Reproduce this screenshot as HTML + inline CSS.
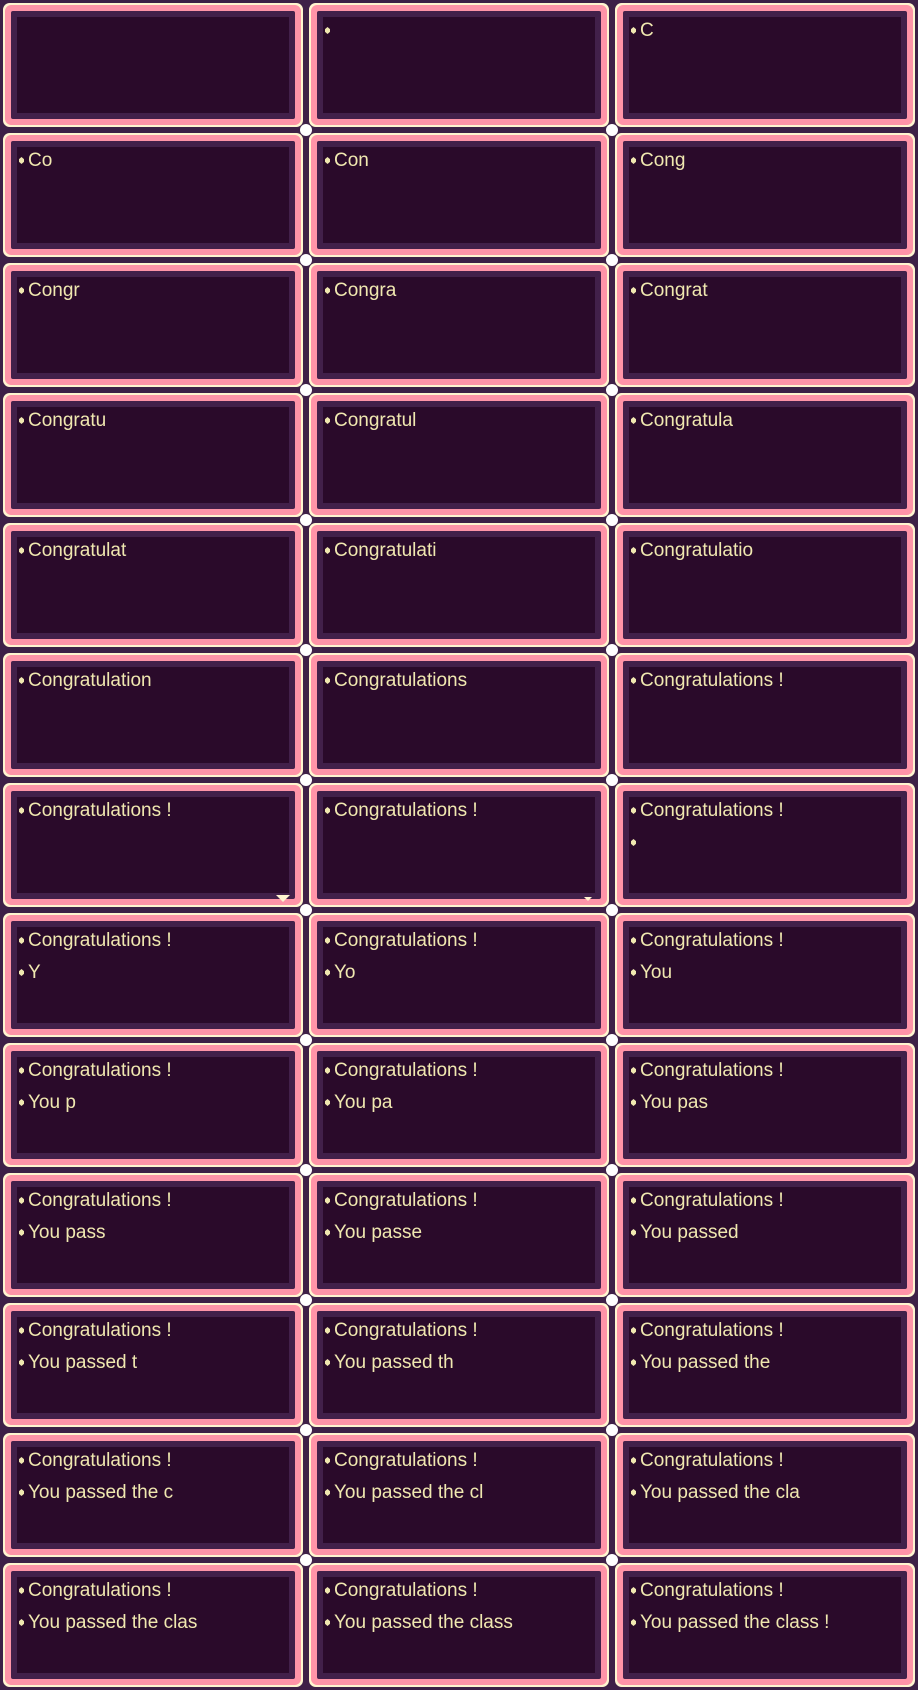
<!DOCTYPE html>
<html><head><meta charset="utf-8"><style>
html,body{margin:0;padding:0;background:#3e2047;}
body{width:918px;height:1690px;position:relative;overflow:hidden;}
.g{display:grid;grid-template-columns:repeat(3,306px);grid-template-rows:repeat(13,130px);}
.cell{position:relative;width:306px;height:130px;}
.b{position:absolute;left:11px;top:11px;width:272px;height:96px;background:#2a0a2a;border:6px solid #42204a;box-shadow:0 0 0 6px #ff94a8,0 0 0 8px #fff5d0;border-radius:2px;}
.t{position:absolute;left:2px;top:-2px;font-family:"Liberation Sans",sans-serif;font-size:19px;line-height:32px;color:#f0e8b0;white-space:pre;letter-spacing:0px;}
.d{display:inline-block;width:5px;height:7px;background:#f0e8b0;margin-right:4px;vertical-align:2px;clip-path:polygon(50% 0,100% 30%,100% 70%,50% 100%,0 70%,0 30%);}
.dot{position:absolute;width:12px;height:12px;border-radius:50%;background:#fff;z-index:5;}
.tri{position:absolute;width:0;height:0;border-left:7px solid transparent;border-right:7px solid transparent;border-top:7px solid #fff5d0;z-index:6;}
</style></head><body>
<div class="g">
<div class="cell"><div class="b"></div></div>
<div class="cell"><div class="b"><div class="t"><span class="d"></span></div></div></div>
<div class="cell"><div class="b"><div class="t"><span class="d"></span>C</div></div></div>
<div class="cell"><div class="b"><div class="t"><span class="d"></span>Co</div></div></div>
<div class="cell"><div class="b"><div class="t"><span class="d"></span>Con</div></div></div>
<div class="cell"><div class="b"><div class="t"><span class="d"></span>Cong</div></div></div>
<div class="cell"><div class="b"><div class="t"><span class="d"></span>Congr</div></div></div>
<div class="cell"><div class="b"><div class="t"><span class="d"></span>Congra</div></div></div>
<div class="cell"><div class="b"><div class="t"><span class="d"></span>Congrat</div></div></div>
<div class="cell"><div class="b"><div class="t"><span class="d"></span>Congratu</div></div></div>
<div class="cell"><div class="b"><div class="t"><span class="d"></span>Congratul</div></div></div>
<div class="cell"><div class="b"><div class="t"><span class="d"></span>Congratula</div></div></div>
<div class="cell"><div class="b"><div class="t"><span class="d"></span>Congratulat</div></div></div>
<div class="cell"><div class="b"><div class="t"><span class="d"></span>Congratulati</div></div></div>
<div class="cell"><div class="b"><div class="t"><span class="d"></span>Congratulatio</div></div></div>
<div class="cell"><div class="b"><div class="t"><span class="d"></span>Congratulation</div></div></div>
<div class="cell"><div class="b"><div class="t"><span class="d"></span>Congratulations</div></div></div>
<div class="cell"><div class="b"><div class="t"><span class="d"></span>Congratulations !</div></div></div>
<div class="cell"><div class="b"><div class="t"><span class="d"></span>Congratulations !</div></div></div>
<div class="cell"><div class="b"><div class="t"><span class="d"></span>Congratulations !</div></div></div>
<div class="cell"><div class="b"><div class="t"><span class="d"></span>Congratulations !
<span class="d"></span></div></div></div>
<div class="cell"><div class="b"><div class="t"><span class="d"></span>Congratulations !
<span class="d"></span>Y</div></div></div>
<div class="cell"><div class="b"><div class="t"><span class="d"></span>Congratulations !
<span class="d"></span>Yo</div></div></div>
<div class="cell"><div class="b"><div class="t"><span class="d"></span>Congratulations !
<span class="d"></span>You</div></div></div>
<div class="cell"><div class="b"><div class="t"><span class="d"></span>Congratulations !
<span class="d"></span>You p</div></div></div>
<div class="cell"><div class="b"><div class="t"><span class="d"></span>Congratulations !
<span class="d"></span>You pa</div></div></div>
<div class="cell"><div class="b"><div class="t"><span class="d"></span>Congratulations !
<span class="d"></span>You pas</div></div></div>
<div class="cell"><div class="b"><div class="t"><span class="d"></span>Congratulations !
<span class="d"></span>You pass</div></div></div>
<div class="cell"><div class="b"><div class="t"><span class="d"></span>Congratulations !
<span class="d"></span>You passe</div></div></div>
<div class="cell"><div class="b"><div class="t"><span class="d"></span>Congratulations !
<span class="d"></span>You passed</div></div></div>
<div class="cell"><div class="b"><div class="t"><span class="d"></span>Congratulations !
<span class="d"></span>You passed t</div></div></div>
<div class="cell"><div class="b"><div class="t"><span class="d"></span>Congratulations !
<span class="d"></span>You passed th</div></div></div>
<div class="cell"><div class="b"><div class="t"><span class="d"></span>Congratulations !
<span class="d"></span>You passed the</div></div></div>
<div class="cell"><div class="b"><div class="t"><span class="d"></span>Congratulations !
<span class="d"></span>You passed the c</div></div></div>
<div class="cell"><div class="b"><div class="t"><span class="d"></span>Congratulations !
<span class="d"></span>You passed the cl</div></div></div>
<div class="cell"><div class="b"><div class="t"><span class="d"></span>Congratulations !
<span class="d"></span>You passed the cla</div></div></div>
<div class="cell"><div class="b"><div class="t"><span class="d"></span>Congratulations !
<span class="d"></span>You passed the clas</div></div></div>
<div class="cell"><div class="b"><div class="t"><span class="d"></span>Congratulations !
<span class="d"></span>You passed the class</div></div></div>
<div class="cell"><div class="b"><div class="t"><span class="d"></span>Congratulations !
<span class="d"></span>You passed the class !</div></div></div>
</div>
<div class="tri" style="left:276px;top:895px;"></div>
<div class="tri" style="left:584px;top:897px;border-left-width:4px;border-right-width:4px;border-top-width:4px;"></div>
<div class="dot" style="left:300px;top:124px"></div><div class="dot" style="left:606px;top:124px"></div>
<div class="dot" style="left:300px;top:254px"></div><div class="dot" style="left:606px;top:254px"></div>
<div class="dot" style="left:300px;top:384px"></div><div class="dot" style="left:606px;top:384px"></div>
<div class="dot" style="left:300px;top:514px"></div><div class="dot" style="left:606px;top:514px"></div>
<div class="dot" style="left:300px;top:644px"></div><div class="dot" style="left:606px;top:644px"></div>
<div class="dot" style="left:300px;top:774px"></div><div class="dot" style="left:606px;top:774px"></div>
<div class="dot" style="left:300px;top:904px"></div><div class="dot" style="left:606px;top:904px"></div>
<div class="dot" style="left:300px;top:1034px"></div><div class="dot" style="left:606px;top:1034px"></div>
<div class="dot" style="left:300px;top:1164px"></div><div class="dot" style="left:606px;top:1164px"></div>
<div class="dot" style="left:300px;top:1294px"></div><div class="dot" style="left:606px;top:1294px"></div>
<div class="dot" style="left:300px;top:1424px"></div><div class="dot" style="left:606px;top:1424px"></div>
<div class="dot" style="left:300px;top:1554px"></div><div class="dot" style="left:606px;top:1554px"></div>
</body></html>
